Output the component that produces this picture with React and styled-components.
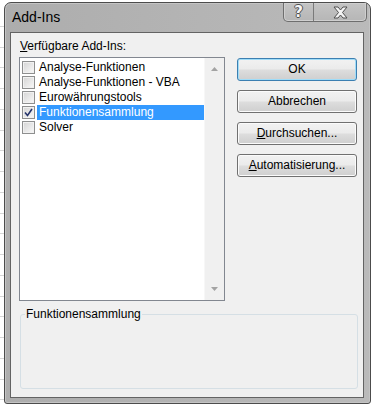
import styled, { createGlobalStyle } from 'styled-components';

const addIns = [
  { name: 'Analyse-Funktionen', checked: false },
  { name: 'Analyse-Funktionen - VBA', checked: false },
  { name: 'Eurowährungstools', checked: false },
  { name: 'Funktionensammlung', checked: true, selected: true },
  { name: 'Solver', checked: false },
];

const GlobalStyle = createGlobalStyle`
  html, body { margin: 0; padding: 0; background: #fff; }
  body {
    font-family: "Liberation Sans", Arial, sans-serif;
    font-size: 12px;
    color: #000;
  }
`;

const Page = styled.div`
  width: 373px;
  height: 407px;
  box-sizing: border-box;
  padding: 2px 0 0 4px;
  overflow: hidden;
  background-color: #fff;
  background-image: repeating-linear-gradient(to bottom, transparent 0 19.75px, #d6d6d6 19.75px 20.75px);
  background-size: 4px 100%;
  background-repeat: no-repeat;
  background-position: 0 6px;
`;

const Window = styled.div`
  width: 367px;
  height: 402px;
  box-sizing: border-box;
  border: 1px solid #4c4c4c;
  border-radius: 7px 7px 3px 3px;
  background: linear-gradient(to right, #adadad, #bababa);
  box-shadow: inset 0 0 0 1px #c4c4c4;
  display: flex;
  flex-direction: column;
`;

const TitleBar = styled.div`
  height: 29px;
  flex: none;
  display: flex;
  justify-content: space-between;
  align-items: flex-start;
  padding: 0 3px 0 7px;
`;

const Title = styled.div`
  margin-top: 6px;
  font-size: 14px;
  line-height: 17px;
  color: #000;
`;

const CaptionGroup = styled.div`
  display: flex;
  height: 19px;
  box-sizing: border-box;
  border: 1px solid #6e6e6e;
  border-top: none;
  border-radius: 0 0 5px 5px;
  overflow: hidden;
  background: linear-gradient(#c4c4c4, #b6b6b6);
  box-shadow: inset 0 0 0 1px #cfcfcf;
`;

const CaptionButton = styled.div`
  width: ${p => p.$w}px;
  display: flex;
  align-items: center;
  justify-content: center;
  & + & { border-left: 1px solid #7a7a7a; }
`;

const HelpGlyph = styled.span`
  font-family: "DejaVu Sans", sans-serif;
  font-weight: bold;
  font-size: 15px;
  line-height: 15px;
  color: #f6f6f6;
  text-shadow: 1px 0 0 #505050, -1px 0 0 #505050, 0 1px 0 #505050, 0 -1px 0 #505050;
`;

const Content = styled.div`
  flex: 1;
  margin: 0 6px 5px 5px;
  border: 1px solid #636363;
  background: #f0f0f0;
  display: flex;
  flex-direction: column;
  padding: 6px 5px 7px 8px;
`;

const TopRow = styled.div`
  display: flex;
  gap: 12px;
`;

const LeftCol = styled.div`
  width: 206px;
  display: flex;
  flex-direction: column;
`;

const Label = styled.div`
  line-height: 15px;
  padding-left: 1px;
  margin-bottom: 3px;
`;

const ListBox = styled.div`
  height: 244px;
  box-sizing: border-box;
  border: 1px solid #828790;
  background: #fff;
  display: flex;
`;

const Items = styled.div`
  flex: 1;
  padding: 2px 0 0 2px;
`;

const Row = styled.div`
  display: flex;
  align-items: center;
  height: 15px;
`;

const Check = styled.div`
  width: 13px;
  height: 13px;
  box-sizing: border-box;
  margin-right: 2px;
  border: 1px solid #8e8f8f;
  background: linear-gradient(135deg, #d4d4d4, #f9f9f9);
  box-shadow: inset 0 0 0 1px #f1f1f1;
  display: flex;
  align-items: center;
  justify-content: center;
`;

const ItemText = styled.span`
  flex: 1;
  line-height: 15px;
  padding: 0 2px;
  white-space: nowrap;
  background: ${p => (p.$selected ? '#3399ff' : 'transparent')};
  color: ${p => (p.$selected ? '#fff' : '#000')};
`;

const ScrollBar = styled.div`
  width: 19px;
  background: #f0f0f0;
  border-left: 1px solid #f7f7f7;
  display: flex;
  flex-direction: column;
  justify-content: space-between;
`;

const Arrow = styled.div`
  height: 22px;
  display: flex;
  align-items: center;
  justify-content: center;
`;

const ButtonCol = styled.div`
  width: 120px;
  margin-top: 19px;
  display: flex;
  flex-direction: column;
  gap: 9px;
`;

const Button = styled.div`
  height: 23px;
  box-sizing: border-box;
  border: 1px solid ${p => (p.$default ? '#3c7fb1' : '#707070')};
  border-radius: 3px;
  background: linear-gradient(#f2f2f2 0%, #ebebeb 48%, #dddddd 52%, #cfcfcf 100%);
  box-shadow: inset 0 0 0 1px ${p => (p.$default ? '#9fdcf8' : '#fbfbfb')};
  display: flex;
  align-items: center;
  justify-content: center;
  line-height: 15px;
`;

const GroupBox = styled.fieldset`
  margin: 6px 0 0 1px;
  padding: 0 0 0 4px;
  min-width: 0;
  height: 82px;
  box-sizing: border-box;
  border: 1px solid #d5dfe5;
  border-radius: 3px;
`;

const Legend = styled.legend`
  padding: 0 1px;
  line-height: 15px;
`;

function CheckMark() {
  return (
    <svg width="9" height="9" viewBox="0 0 9 9">
      <path d="M1 4.5 L3.5 7.5 L8 1" fill="none" stroke="#26346b" strokeWidth="1.6" />
    </svg>
  );
}

function CloseGlyph() {
  return (
    <svg width="15" height="13" viewBox="0 0 15 13">
      <path
        d="M1 1 H5 L7.5 4 L10 1 H14 L9.5 6.5 L14 12 H10 L7.5 9 L5 12 H1 L5.5 6.5 Z"
        fill="#f4f4f4"
        stroke="#505050"
        strokeWidth="1"
        strokeLinejoin="round"
      />
    </svg>
  );
}

export default function App() {
  return (
    <Page>
      <GlobalStyle />
      <Window>
        <TitleBar>
          <Title>Add-Ins</Title>
          <CaptionGroup>
            <CaptionButton $w={29}><HelpGlyph>?</HelpGlyph></CaptionButton>
            <CaptionButton $w={52}><CloseGlyph /></CaptionButton>
          </CaptionGroup>
        </TitleBar>
        <Content>
          <TopRow>
            <LeftCol>
              <Label><u>V</u>erfügbare Add-Ins:</Label>
              <ListBox>
                <Items>
                  {addIns.map(a => (
                    <Row key={a.name}>
                      <Check>{a.checked && <CheckMark />}</Check>
                      <ItemText $selected={a.selected}>{a.name}</ItemText>
                    </Row>
                  ))}
                </Items>
                <ScrollBar>
                  <Arrow>
                    <svg width="7" height="4" viewBox="0 0 7 4"><path d="M0 4 L3.5 0 L7 4 Z" fill="#a3a3a3" /></svg>
                  </Arrow>
                  <Arrow>
                    <svg width="7" height="4" viewBox="0 0 7 4"><path d="M0 0 L3.5 4 L7 0 Z" fill="#a3a3a3" /></svg>
                  </Arrow>
                </ScrollBar>
              </ListBox>
            </LeftCol>
            <ButtonCol>
              <Button $default>OK</Button>
              <Button>Abbrechen</Button>
              <Button><span><u>D</u>urchsuchen...</span></Button>
              <Button><span><u>A</u>utomatisierung...</span></Button>
            </ButtonCol>
          </TopRow>
          <GroupBox>
            <Legend>Funktionensammlung</Legend>
          </GroupBox>
        </Content>
      </Window>
    </Page>
  );
}
